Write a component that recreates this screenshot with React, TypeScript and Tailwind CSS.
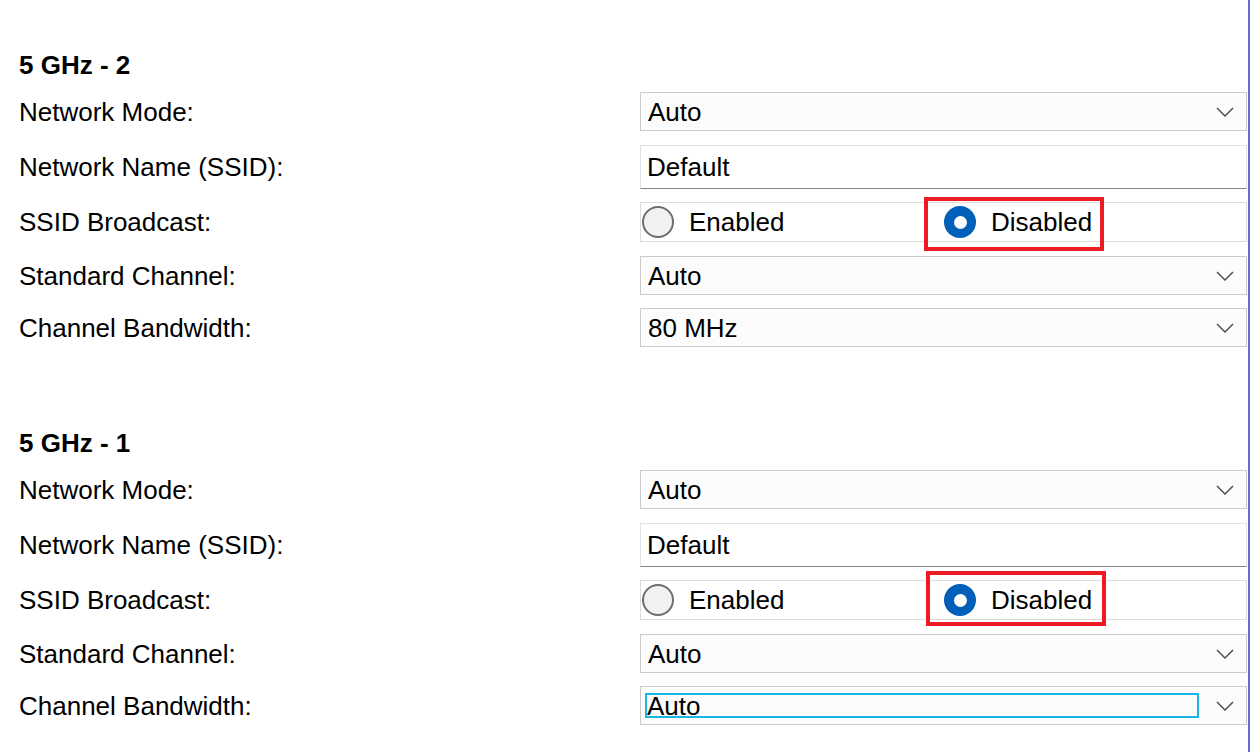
import React from "react";

///////// Wireless settings — two 5 GHz bands, SSID broadcast radios //////////

type Band = {
  title: string;
  mode: string;
  ssid: string;
  channel: string;
  bandwidth: string;
  focused?: boolean;
};

const bands: Band[] = [
  { title: "5 GHz - 2", mode: "Auto", ssid: "Default", channel: "Auto", bandwidth: "80 MHz" },
  { title: "5 GHz - 1", mode: "Auto", ssid: "Default", channel: "Auto", bandwidth: "Auto", focused: true },
];

const font = { fontFamily: '"Liberation Sans", Arial, sans-serif' };

function Chevron() {
  return (
    <svg width="18" height="10" viewBox="0 0 18 10" className="shrink-0">
      <path d="M1 1 L9 9 L17 1" fill="none" stroke="#505050" strokeWidth="1.5" />
    </svg>
  );
}

function Select({ value, focused }: { value: string; focused?: boolean }) {
  return (
    <div className="flex h-[39px] flex-1 items-center border border-[#cbcbcb] bg-[#fcfcfc] pl-[7px] pr-[12px]">
      <div className="flex flex-1 items-center">
        {focused ? (
          <span className="-ml-[3px] mr-[17px] flex h-[25px] flex-1 items-center border-2 border-[#18b4e2] leading-none">
            {value}
          </span>
        ) : (
          <span className="leading-none">{value}</span>
        )}
      </div>
      <Chevron />
    </div>
  );
}

function Input({ value }: { value: string }) {
  return (
    <div className="flex h-[44px] flex-1 items-center border border-[#e3e3e3] border-b-[#858585] bg-white pl-[6px]">
      <span className="leading-none">{value}</span>
    </div>
  );
}

function Radio({ checked, label }: { checked?: boolean; label: string }) {
  return (
    <div className="flex w-[302px] items-center">
      {checked ? (
        <span className="flex h-[32px] w-[32px] items-center justify-center rounded-full bg-[#005fb8]">
          <span className="h-[13px] w-[13px] rounded-full bg-white" />
        </span>
      ) : (
        <span className="h-[32px] w-[32px] rounded-full border-2 border-[#6d6d6d] bg-[#f1f1f1]" />
      )}
      <span className="ml-[15px] leading-none">{label}</span>
    </div>
  );
}

function Row({ label, children, mt }: { label: string; children: React.ReactNode; mt: string }) {
  return (
    <div className={`flex items-center ${mt}`}>
      <div className="w-[621px] shrink-0 leading-none">{label}</div>
      {children}
    </div>
  );
}

function BandSection({ band, index }: { band: Band; index: number }) {
  return (
    <section className={index === 0 ? "pt-[52px]" : "pt-[83px]"}>
      <h2 className="mb-[14px] flex h-[26px] items-center text-[26px] font-bold leading-none">
        {band.title}
      </h2>
      <Row label="Network Mode:" mt="mt-0">
        <Select value={band.mode} />
      </Row>
      <Row label="Network Name (SSID):" mt="mt-[14px]">
        <Input value={band.ssid} />
      </Row>
      <Row label="SSID Broadcast:" mt="mt-[13px]">
        <div className="relative flex h-[40px] flex-1 items-center border border-[#dcdcdc] bg-white pl-[1px]">
          <Radio label="Enabled" />
          <Radio checked label="Disabled" />
          {/* red annotation box */}
          {index === 0 ? (
            <div className="pointer-events-none absolute left-[283px] top-[-6px] h-[54px] w-[180px] border-4 border-[#ec1c24]" />
          ) : (
            <div className="pointer-events-none absolute left-[285px] top-[-10px] h-[55px] w-[180px] border-4 border-[#ec1c24]" />
          )}
        </div>
      </Row>
      <Row label="Standard Channel:" mt="mt-[14px]">
        <Select value={band.channel} />
      </Row>
      <Row label="Channel Bandwidth:" mt="mt-[13px]">
        <Select value={band.bandwidth} focused={band.focused} />
      </Row>
    </section>
  );
}

export default function App() {
  return (
    <div
      className="h-[752px] w-[1250px] overflow-hidden border-r-2 border-[#6a6ad4] bg-white pl-[19px] pr-[1px] text-[26px] text-black"
      style={font}
    >
      {bands.map((band, i) => (
        <BandSection key={band.title} band={band} index={i} />
      ))}
    </div>
  );
}
